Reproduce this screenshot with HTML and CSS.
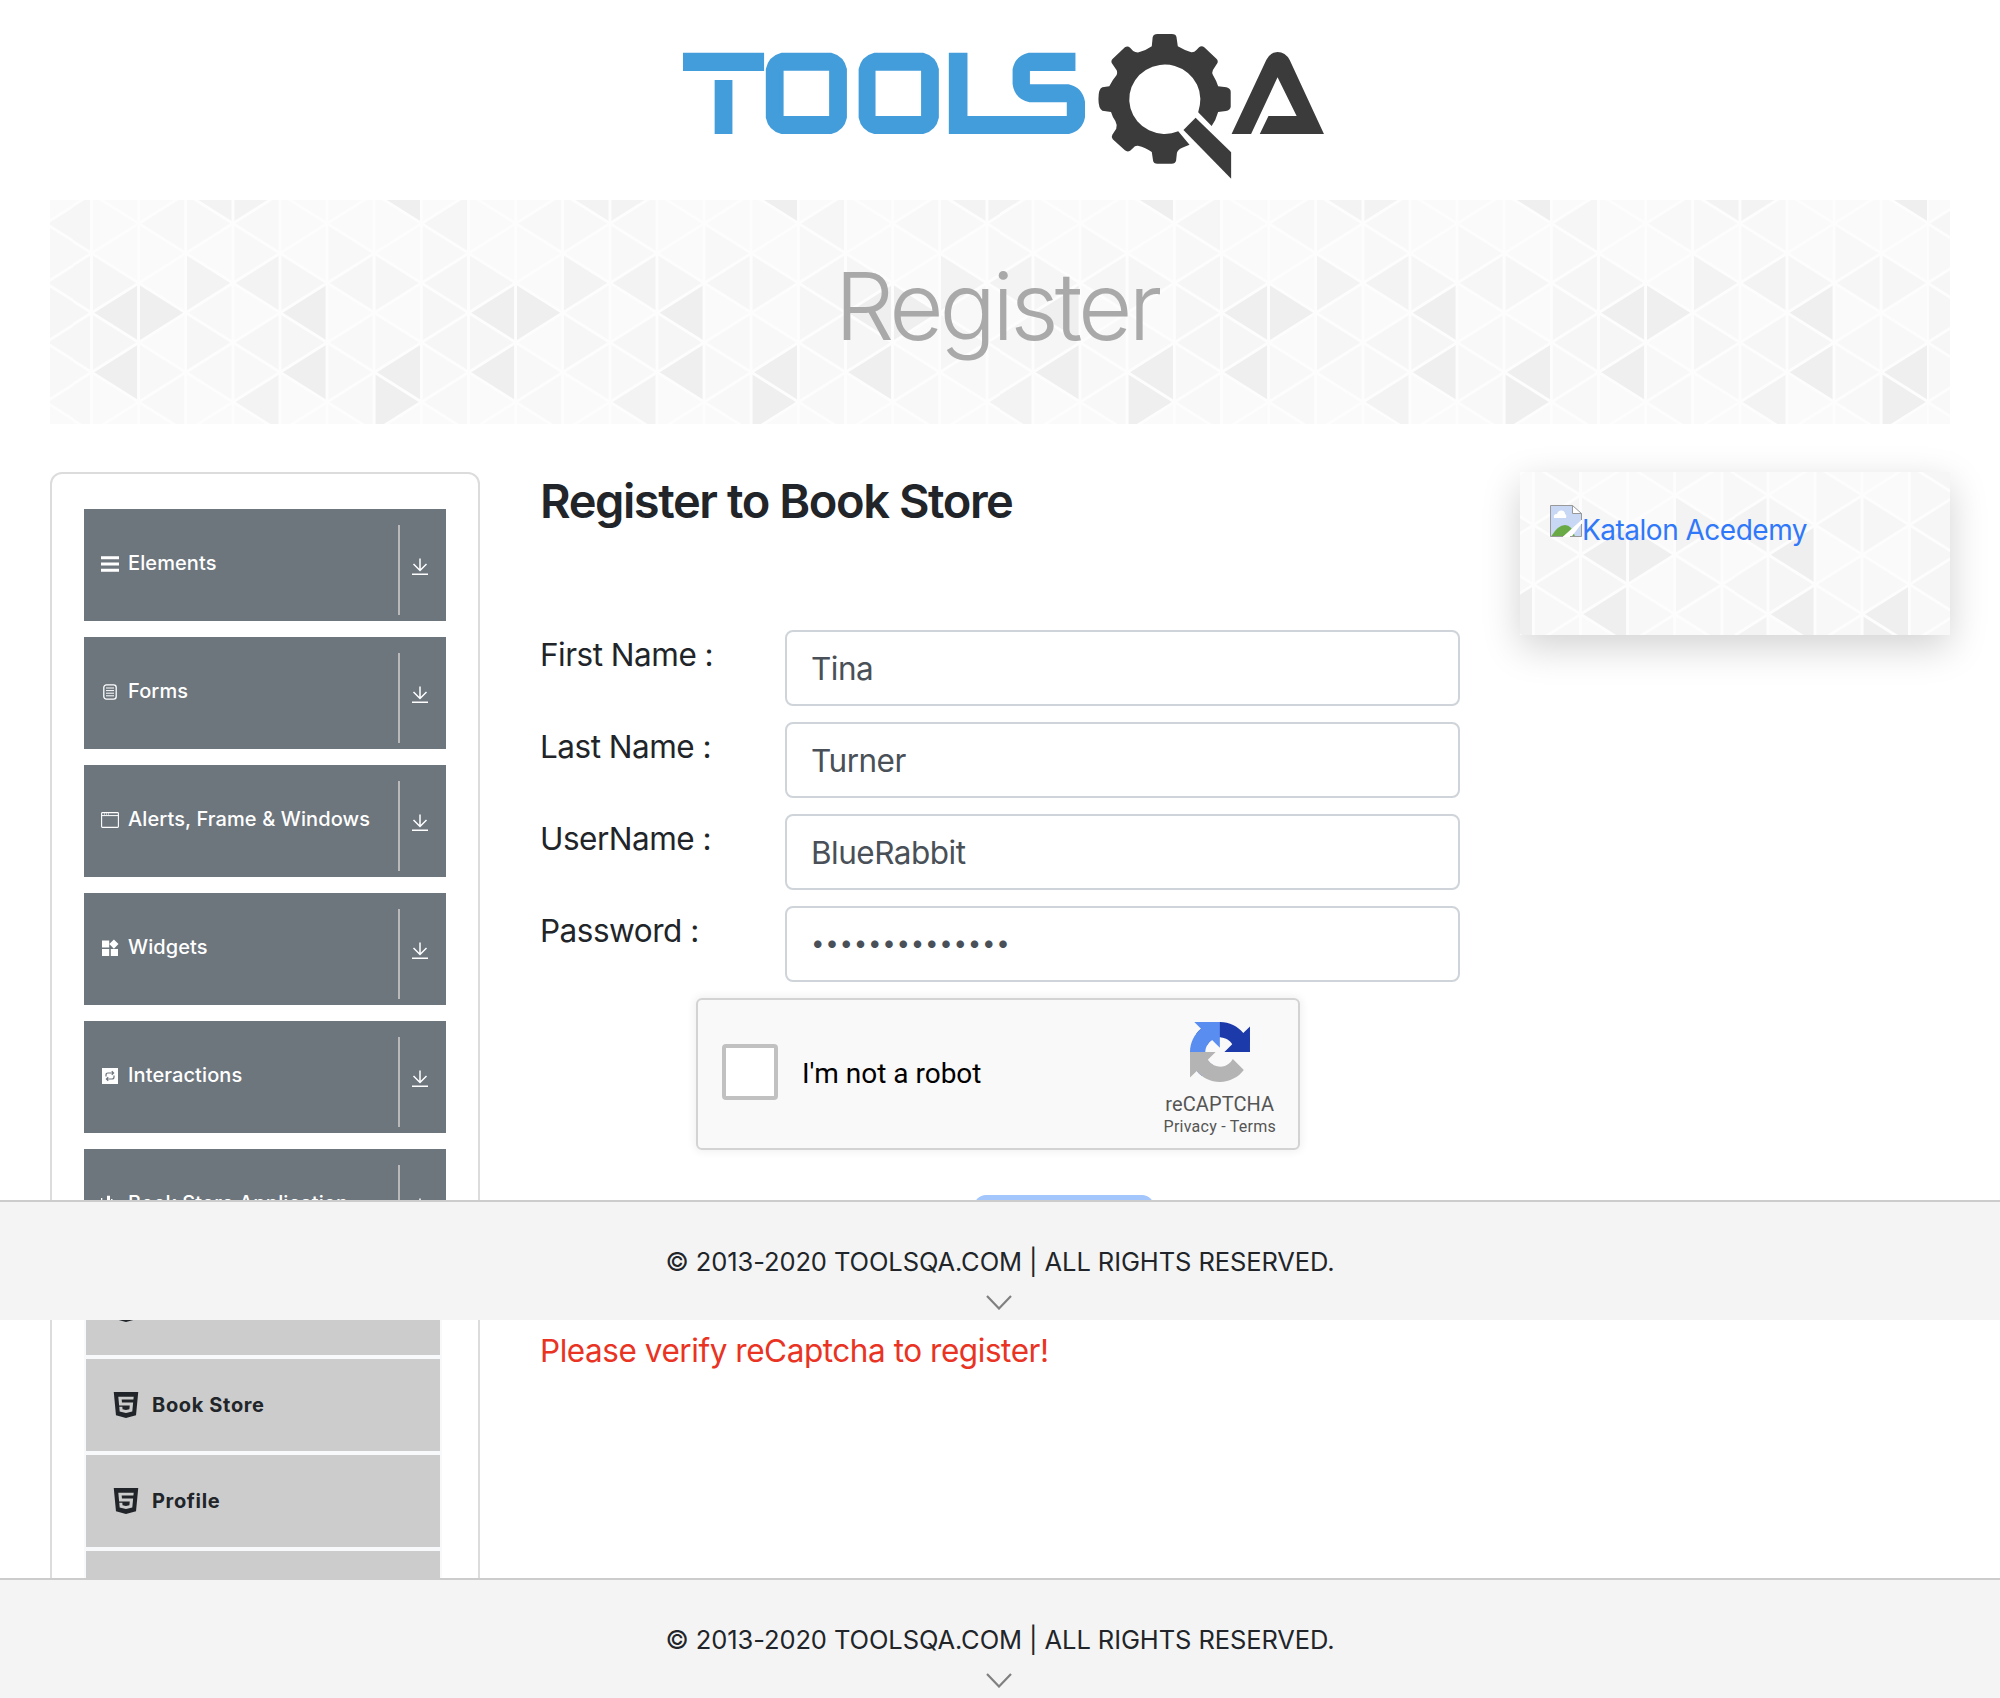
FILE: index.html
```html
<!DOCTYPE html>
<html lang="en">
<head>
<meta charset="utf-8">
<title>ToolsQA - Register</title>
<link rel="stylesheet" href="styles.css">
</head>
<body>
<svg class="defs" width="0" height="0" aria-hidden="true">
  <symbol id="download" viewBox="0 0 16 18"><path d="M8 .6v12M1.500 6l6.500 6.500L14.500 6M0 16.200h16" fill="none" stroke="currentColor" stroke-width="1.5"/></symbol>
  <symbol id="html5" viewBox="0 0 24 24" preserveAspectRatio="none"><path fill="currentColor" d="M1.5 0h21l-1.91 21.563L11.977 24l-8.564-2.438L1.5 0zm7.031 9.75l-.232-2.718 10.059.003.23-2.622L5.412 4.41l.698 8.01h9.126l-.326 3.426-2.91.804-2.955-.81-.188-2.11H6.248l.33 4.171L12 19.351l5.379-1.443.744-8.157H8.531z"/></symbol>
  <symbol id="chevron" viewBox="0 0 26 15"><path d="M1 1l12 12.5L25 1" fill="none" stroke="#808080" stroke-width="2.2"/></symbol>
</svg>

<div class="page">
  <header class="header">
    <svg class="logo" viewBox="0 0 1568 510" preserveAspectRatio="none" role="img" aria-label="TOOLSQA">
      <g fill="#449ddb" fill-rule="evenodd">
        <path d="M53 98H240V153H53ZM126 180H167V342H126Z"/>
        <path d="M280 98H395Q425 108 431 147V293Q425 332 395 342H280Q250 332 244 293V147Q250 108 280 98ZM285 152V288H390V152Z"/>
        <path d="M494 98H607Q637 108 643 147V293Q637 332 607 342H494Q464 332 458 293V147Q464 108 494 98ZM497 152V288H602V152Z"/>
        <path d="M666 98H709V288H938V247H852Q818 238 813 192V148Q819 107 850 98H958V153H853V193H942Q974 202 980 245V292Q974 333 943 342H666Z"/>
      </g>
      <g fill="#3b3b3b">
        <path d="M1134 79L1136 52Q1138 42 1147 42H1180Q1190 42 1191 52L1194 79Q1208 90 1225 97Q1232 98 1237 90L1243 82Q1249 76 1255 82L1283 116Q1288 122 1285 130L1275 150Q1272 158 1275 165Q1283 182 1287 199L1306 202Q1316 206 1316 215V260Q1315 270 1305 273L1287 276Q1282 300 1272 318L1241 277Q1246 255 1246 236A82 104 0 1 0 1195 334L1221 374L1207 382Q1195 388 1192 398L1190 422Q1188 431 1180 431H1147Q1138 431 1137 422L1134 396Q1120 382 1102 377Q1095 376 1091 384L1084 392Q1078 397 1072 391L1044 358Q1040 350 1043 344L1052 326Q1055 315 1050 303Q1043 290 1040 276L1020 272Q1011 266 1011 237Q1011 206 1020 202L1036 199Q1043 180 1053 165Q1056 155 1051 147L1042 130Q1039 122 1044 116L1072 82Q1078 76 1084 83L1091 93Q1097 98 1104 97Q1120 92 1134 79Z"/>
        <path d="M1235 293L1317 397V476L1207 330Z"/>
        <path d="M1318 342L1398 120Q1407 96 1424 96Q1442 96 1452 120L1531 342H1383L1403 288H1468L1424 172L1363 342Z"/>
      </g>
    </svg>
  </header>

  <div class="banner triangles"><h1>Register</h1></div>

  <div class="columns">
    <nav class="sidebar">
      <div class="group">
        <svg class="icon" viewBox="0 0 18 18"><path d="M0 2.7h18M0 9h18M0 15.3h18" stroke="currentColor" stroke-width="3"/></svg>
        <span class="name">Elements</span><i class="bar"></i><svg class="arrow"><use href="#download"/></svg>
      </div>
      <div class="group">
        <svg class="icon" viewBox="0 0 18 18" fill="none" stroke="currentColor"><rect x="2.8" y="1.9" width="12.4" height="14.2" rx="2.6" stroke-width="1.3"/><path d="M5 5h8M5 7.6h8M5 10.2h8M5 12.8h8" stroke-width="1"/></svg>
        <span class="name">Forms</span><i class="bar"></i><svg class="arrow"><use href="#download"/></svg>
      </div>
      <div class="group">
        <svg class="icon" viewBox="0 0 18 18" fill="none" stroke="currentColor"><rect x=".6" y="1.6" width="16.8" height="14.8" rx=".8" stroke-width="1.1"/><path d="M.6 4.6h16.8M3 3h1M5 3h1M7 3h1" stroke-width="1"/></svg>
        <span class="name">Alerts, Frame &amp; Windows</span><i class="bar"></i><svg class="arrow"><use href="#download"/></svg>
      </div>
      <div class="group">
        <svg class="icon" viewBox="0 0 18 18" fill="currentColor"><path d="M1 1.5h7.2v7H1zM1 10h7.2v7H1zM9.8 10H17v7H9.8zM12.9.6l4.6 4.5-4.6 4.6-4.6-4.6z"/></svg>
        <span class="name">Widgets</span><i class="bar"></i><svg class="arrow"><use href="#download"/></svg>
      </div>
      <div class="group">
        <svg class="icon" viewBox="0 0 18 18"><rect x="1" y="1" width="16" height="16" fill="currentColor"/><path d="M5 9.5V8q0-2 2-2h5M10.8 4.2L12.6 6l-1.8 1.8M13 8.5V10q0 2-2 2H6M7.2 10.2L5.400 12l1.800 1.800" fill="none" stroke="#6d757d" stroke-width="1.2"/></svg>
        <span class="name">Interactions</span><i class="bar"></i><svg class="arrow"><use href="#download"/></svg>
      </div>
      <div class="group">
        <svg class="icon" viewBox="0 0 18 18" fill="currentColor"><path d="M0 3h1.300v13H0zM6 .800h3v16H6zM10 4h1.500v12H10z"/></svg>
        <span class="name">Book Store Application</span><i class="bar"></i><svg class="arrow"><use href="#download"/></svg>
      </div>
      <ul class="links">
        <li><svg><use href="#html5"/></svg></li>
        <li><svg><use href="#html5"/></svg>Book Store</li>
        <li><svg><use href="#html5"/></svg>Profile</li>
        <li></li>
      </ul>
    </nav>

    <main class="main">
      <h2>Register to Book Store</h2>
      <div class="form">
        <div class="row"><label>First Name :</label><div class="field">Tina</div></div>
        <div class="row"><label>Last Name :</label><div class="field">Turner</div></div>
        <div class="row"><label>UserName :</label><div class="field">BlueRabbit</div></div>
        <div class="row"><label>Password :</label><div class="field dots">••••••••••••••</div></div>
      </div>
      <div class="captcha">
        <span class="check"></span>
        <span class="robot">I'm not a robot</span>
        <div class="brand">
          <svg viewBox="0 0 64 64">
            <path fill="#1c3aa9" d="M64 31.955l-.033-1.370V4.687l-7.160 7.160C50.948 4.674 42.033.093 32.050.093c-10.400 0-19.622 4.960-25.458 12.640l11.736 11.860a15.550 15.550 0 0 1 4.754-5.334c2.050-1.600 4.952-2.906 8.968-2.906.485 0 .860.057 1.135.163 4.976.393 9.288 3.140 11.828 7.124l-8.307 8.307L64 31.953"/>
            <path fill="#5a8df0" d="M31.862.094l-1.370.033H4.594l7.160 7.160C4.580 13.147 0 22.060 0 32.046c0 10.400 4.960 19.622 12.640 25.458l11.860-11.736a15.550 15.550 0 0 1-5.334-4.754c-1.600-2.050-2.906-4.952-2.906-8.968 0-.485.057-.860.163-1.135.393-4.976 3.140-9.288 7.124-11.828l8.307 8.307L31.860.095"/>
            <path fill="#b4b4b4" d="M.001 32.045l.033 1.370v25.898l7.160-7.160c5.860 7.173 14.774 11.754 24.760 11.754 10.400 0 19.622-4.960 25.458-12.640l-11.736-11.860a15.550 15.550 0 0 1-4.754 5.334c-2.050 1.600-4.952 2.906-8.968 2.906-.485 0-.860-.057-1.135-.163-4.976-.393-9.288-3.140-11.828-7.124l8.307-8.307c-10.522.040-22.400.066-27.295-.005"/>
          </svg>
          <span class="brand-name">reCAPTCHA</span>
          <span class="terms">Privacy - Terms</span>
        </div>
      </div>
      <div class="submit"></div>
      <p class="error">Please verify reCaptcha to register!</p>
    </main>

    <aside class="card triangles">
      <svg viewBox="0 0 32 32">
        <path d="M.5.500H22.500L31.500 8V31.500H.5Z" fill="#c8d7f4"/>
        <path d="M4 13q-1-4 3-4 1-4 5-3.500 3 .5 3 3.500 2 1 1 4z" fill="#fff"/>
        <path d="M1 31.500Q8 20 15 20t10 11.500z" fill="#6aaa46"/>
        <path d="M12 32.500L32 14.500V18L21 32.500Z" fill="#fff"/>
        <path d="M22.500.5V8.500H31.500Z" fill="#fff"/>
        <path d="M13 31.500H.5V.5H22.500L31.500 8.500V15M31.500 19V31.500H20M22.500.5V8.500H31.500" fill="none" stroke="#999"/>
      </svg>
      <a>Katalon Acedemy</a>
    </aside>
  </div>

  <footer class="footer footer-upper"><span>© 2013-2020 TOOLSQA.COM | ALL RIGHTS RESERVED.</span><svg><use href="#chevron"/></svg></footer>
  <footer class="footer footer-lower"><span>© 2013-2020 TOOLSQA.COM | ALL RIGHTS RESERVED.</span><svg><use href="#chevron"/></svg></footer>
</div>
</body>
</html>
```
FILE: styles.css
```css
* { box-sizing: border-box; }

body {
  margin: 0;
  background: #fff;
  color: #212529;
  font-family: Inter, "Liberation Sans", sans-serif;
}

.defs { position: absolute; }

.page {
  position: relative;
  width: 2000px;
  height: 1698px;
  padding: 0 50px;
  overflow: hidden;
}

.header {
  height: 200px;
  padding-top: 20px;
  text-align: center;
}

.logo {
  display: block;
  width: 680px;
  height: 170px;
  margin: 0 auto;
}

/* Triangle lattice tile, repeated from the centre of the box */
.triangles {
  background: #fafafa url("data:image/svg+xml,%3Csvg xmlns='http://www.w3.org/2000/svg' width='376.6' height='238' viewBox='57.6 9.2 1130 714' preserveAspectRatio='none'%3E%3Crect x='0' y='0' width='1300' height='800' fill='%23fafafa'/%3E%3Cg fill='%23efefef'%3E%3Cpath d='M158 368L300 279V457ZM158 547L300 457V636ZM300 279L440 368 300 457ZM722 368L862 279V457ZM722 547L862 457V636ZM1002 11L1145-78V100ZM1002 547L1145 457V636ZM1002 547L1145 636 1002 725Z'/%3E%3C/g%3E%3Cg fill='%23f3f3f3'%3E%3Cpath d='M440 190L582 279 440 368ZM582 279L722 190V368ZM582-78L722 11 582 100ZM440 11L582-78V100ZM582 636L722 547V725Z'/%3E%3C/g%3E%3Cg fill='%23f6f6f6'%3E%3Cpath d='M158 190L300 279 158 368ZM158 368L300 457 158 547ZM440 368L582 457 440 547ZM722 190L862 279 722 368ZM722 368L862 457 722 547ZM862 279L1002 190V368ZM1002 190L1145 279 1002 368ZM1145 279L1287 190V368ZM1145 279L1287 368 1145 457ZM15 279L158 368 15 457ZM15 279L158 190V368ZM15 100L158 11V190ZM1145 100L1287 11V190ZM15 457L158 368V547ZM1145 457L1287 368V547ZM582 457L722 368V547Z'/%3E%3C/g%3E%3Cg fill='%23f8f8f8'%3E%3Cpath d='M300 100L440 11V190ZM440 368L582 279V457ZM440 547L582 457V636ZM440 11L582 100 440 190ZM582 100L722 11V190ZM582 457L722 547 582 636ZM862 457L1002 368V547ZM862 636L1002 547V725ZM862 100L1002 190 862 279ZM862 457L1002 547 862 636ZM1145 457L1287 547 1145 636ZM15 457L158 547 15 636ZM1145 100L1287 190 1145 279ZM15 100L158 190 15 279ZM1145 636L1287 547V725ZM15 636L158 547V725ZM300 636L440 547V725ZM300 457L440 547 300 636ZM582 100L722 190 582 279ZM1002 368L1145 457 1002 547Z'/%3E%3C/g%3E%3Cg fill='none' stroke='%23fdfdfd'%3E%3Cpath stroke-width='9' d='M158 0V800M299 0V800M440 0V800M582 0V800M723 0V800M864 0V800M1005 0V800M1147 0V800'/%3E%3Cpath stroke-width='9' d='M17-791.8l1271 803.250M17-613.300l1271 803.250M17-434.800l1271 803.250M17-256.300l1271 803.250M17-77.800l1271 803.250M17 100.700l1271 803.250M17 279.200l1271 803.250M17 457.700l1271 803.250M17 636.200l1271 803.250M17 100.700l1271-803.250M17 279.200l1271-803.250M17 457.700l1271-803.250M17 636.200l1271-803.250M17 814.700l1271-803.250M17 993.200l1271-803.250M17 1171.700l1271-803.250M17 1350.200l1271-803.250M17 1528.700l1271-803.250'/%3E%3C/g%3E%3C/svg%3E") center / 376.6px 238px;
}

.banner {
  display: flex;
  align-items: center;
  justify-content: center;
  height: 224px;
  padding: 0 7px 12px 0;
}

.banner h1 {
  margin: 0;
  color: #a9a9a9;
  font-size: 94px;
  font-weight: 340;
  line-height: 1.2;
  letter-spacing: -4px;
}

.columns {
  display: grid;
  grid-template-columns: 430px 920px 430px;
  column-gap: 60px;
  align-items: start;
  margin-top: 48px;
}

.sidebar {
  height: 1300px;
  padding: 35px 32px 0;
  border: 2px solid #dcdcdc;
  border-radius: 12px;
}

.group {
  display: flex;
  align-items: center;
  height: 112px;
  margin-bottom: 16px;
  padding: 0 18px 5px 17px;
  background: #6d757d;
  color: #fff;
}

.group .icon {
  width: 18px;
  height: 18px;
  margin: 2px 9px 0 0;
}

.name {
  flex: 1;
  font-size: 20px;
  font-weight: 500;
  line-height: 30px;
  letter-spacing: 0.1px;
  white-space: nowrap;
}

.bar {
  width: 2px;
  height: 90px;
  margin: 15px 12px 0 0;
  background: #b9b9b9;
}

.arrow {
  width: 16px;
  height: 18px;
  margin-top: 8px;
}

.links {
  width: 358px;
  margin: -16px 0 0;
  padding: 2px 2px 0;
  background: #f8f9fa;
  list-style: none;
}

.links li {
  display: flex;
  align-items: center;
  height: 92px;
  margin-bottom: 4px;
  padding-left: 26px;
  background: #ccc;
  font-size: 20px;
  font-weight: 700;
  letter-spacing: 0.65px;
}

.links svg {
  width: 28px;
  height: 26px;
  margin-right: 12px;
}

.main h2 {
  margin: 0 0 100px;
  font-size: 47px;
  font-weight: 600;
  line-height: 58px;
  letter-spacing: -1.43px;
}

.form {
  display: grid;
  gap: 16px;
}

.row {
  display: grid;
  grid-template-columns: 245px 675px;
  font-size: 31.5px;
  line-height: 50px;
  letter-spacing: -0.5px;
}

.field {
  height: 76px;
  padding: 12px 24px;
  border: 2px solid #ced4da;
  border-radius: 8px;
  color: #495057;
}

.dots {
  font-size: 24px;
  line-height: 45px;
  letter-spacing: 0.75px;
}

.captcha {
  display: flex;
  width: 604px;
  height: 152px;
  margin: 16px 0 0 156px;
  padding: 0 22px 0 24px;
  align-items: center;
  border: 2px solid #d3d3d3;
  border-radius: 6px;
  background: #f9f9f9;
  box-shadow: 0 0 8px 2px rgba(0, 0, 0, 0.06);
  font-family: Roboto, sans-serif;
}

.check {
  width: 56px;
  height: 56px;
  margin-right: 24px;
  margin-bottom: 4px;
  border: 4px solid #c1c1c1;
  border-radius: 4px;
  background: #fff;
}

.robot {
  flex: 1;
  color: #000;
  font-size: 28px;
  line-height: 34px;
}

.brand {
  display: flex;
  flex-direction: column;
  align-items: center;
  padding-top: 12px;
  color: #555;
}

.brand svg {
  width: 60px;
  height: 60px;
  margin-bottom: 10px;
}

.brand-name {
  font-size: 20px;
  line-height: 24px;
  letter-spacing: 0.1px;
}

.terms {
  font-size: 16px;
  line-height: 22px;
  letter-spacing: 0.25px;
}

.submit {
  width: 180px;
  height: 76px;
  margin: 45px 0 56px 434px;
  border-radius: 12px;
  background: #a3c6fc;
}

.error {
  margin: 0;
  color: #e93323;
  font-size: 31.5px;
  line-height: 48px;
  letter-spacing: -0.45px;
}

.card {
  display: flex;
  height: 163px;
  padding: 33px 0 0 30px;
  box-shadow: 0 12px 36px rgba(0, 0, 0, 0.18);
}

.card svg {
  width: 32px;
  height: 32px;
}

.card a {
  margin-top: 4px;
  color: #3078fa;
  font-size: 28px;
  line-height: 42px;
  letter-spacing: -0.5px;
}

.footer {
  position: absolute;
  left: 0;
  display: flex;
  flex-direction: column;
  align-items: center;
  width: 100%;
  height: 120px;
  padding-top: 40px;
  border-top: 2px solid #ccc;
  background: #f4f4f4;
  font-size: 25.5px;
  line-height: 40px;
  letter-spacing: -0.09px;
  white-space: nowrap;
}

.footer-upper { top: 1200px; }
.footer-lower { top: 1578px; }

.footer svg {
  width: 26px;
  height: 15px;
  margin: 13px 2px 0 0;
}
```
